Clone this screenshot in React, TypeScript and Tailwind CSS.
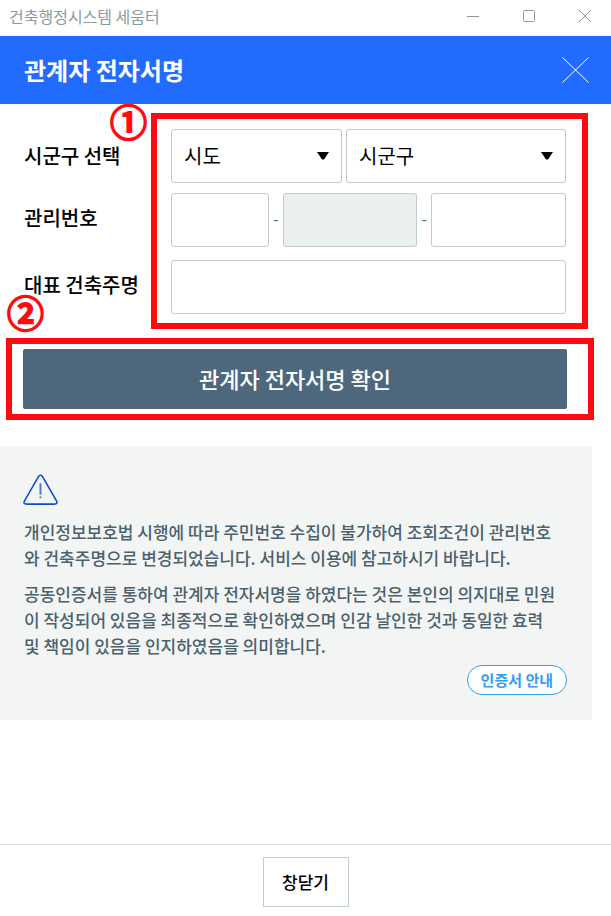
import type { ReactNode } from "react";

const fieldClass =
  "h-[54px] w-full min-w-0 rounded-[3px] border border-[#c0cdcd] bg-white px-3 text-xl text-black disabled:bg-[#eaefef]";

function SelectBox({ id, label, text, className }: { id: string; label: string; text: string; className: string }) {
  return (
    <div className={`relative min-w-0 ${className}`}>
      <select id={id} aria-label={label} className={`${fieldClass} appearance-none`}>
        <option>{text}</option>
      </select>
      <svg
        viewBox="0 0 12 8"
        className="pointer-events-none absolute top-[23px] right-[13px] h-2 w-3 fill-black"
        aria-hidden="true"
      >
        <path d="M0 0h12L7 7.5H5z" />
      </svg>
    </div>
  );
}

function Label({ htmlFor, children }: { htmlFor: string; children: ReactNode }) {
  return (
    <label htmlFor={htmlFor} className="w-[147px] shrink-0 text-xl leading-[50px] font-medium text-black">
      {children}
    </label>
  );
}

function Marker({ children, className }: { children: ReactNode; className: string }) {
  return (
    <span
      className={`absolute text-[37px] leading-9 font-medium text-[#ff0a10] [-webkit-text-stroke:2px_#ff0a10] ${className}`}
    >
      {children}
    </span>
  );
}

export default function App() {
  return (
    <div className="flex min-h-screen flex-col bg-white font-['Noto_Sans_CJK_KR',sans-serif]">
      <div className="flex h-9 items-center justify-between pr-5 pl-[9px] text-[#8a9aa0]">
        <span className="pb-1 text-base leading-7">건축행정시스템 세움터</span>
        <div className="flex items-center gap-11 pb-1">
          <button type="button" aria-label="최소화">
            <svg viewBox="0 0 12 12" className="h-3 w-3" fill="none" stroke="currentColor">
              <path d="M0 6.5h12" />
            </svg>
          </button>
          <button type="button" aria-label="최대화">
            <svg viewBox="0 0 12 12" className="h-3 w-3" fill="none" stroke="currentColor">
              <rect x="0.5" y="0.5" width="11" height="11" rx="1" />
            </svg>
          </button>
          <button type="button" aria-label="창 닫기">
            <svg viewBox="0 0 12 12" className="h-3 w-3" fill="none" stroke="currentColor">
              <path d="M0 0l12 12M12 0L0 12" />
            </svg>
          </button>
        </div>
      </div>

      <header className="flex h-[68px] items-center justify-between bg-[#226bff] pr-[22px] pl-6 text-white">
        <h1 className="text-2xl font-bold">관계자 전자서명</h1>
        <button type="button" aria-label="닫기">
          <svg viewBox="0 0 27 26" className="h-[26px] w-[27px]" fill="none" stroke="currentColor">
            <path d="M0.5 0.5l26 25M26.5 0.5l-26 25" />
          </svg>
        </button>
      </header>

      <main className="mr-[19px] grow">
        <form className="pt-[25px] pr-[25px] pl-[23px]">
          <div className="relative px-px">
            <div className="flex items-center">
              <Label htmlFor="sido">시군구 선택</Label>
              <div className="flex min-w-0 grow gap-1">
                <SelectBox id="sido" label="시도" text="시도" className="flex-[171]" />
                <SelectBox id="sigungu" label="시군구" text="시군구" className="flex-[220]" />
              </div>
            </div>
            <div className="mt-[10px] flex">
              <Label htmlFor="no1">관리번호</Label>
              <div className="flex min-w-0 grow items-center text-base text-[#4d677d]">
                <div className="min-w-0 flex-[98]">
                  <input id="no1" type="text" className={fieldClass} />
                </div>
                <span className="w-[14px] pb-1 text-center">-</span>
                <div className="min-w-0 flex-[135]">
                  <input aria-label="관리번호 구분" type="text" disabled className={fieldClass} />
                </div>
                <span className="w-[14px] pb-1 text-center">-</span>
                <div className="min-w-0 flex-[135]">
                  <input aria-label="관리번호 일련번호" type="text" className={fieldClass} />
                </div>
              </div>
            </div>
            <div className="mt-[13px] flex">
              <Label htmlFor="owner">대표 건축주명</Label>
              <input id="owner" type="text" className={fieldClass} />
            </div>
            <div className="pointer-events-none absolute -top-4 -right-[21px] -bottom-[15px] left-32 border-6 border-[#ff0a10]" />
            <Marker className="-top-[26px] left-[87px]">①</Marker>
          </div>
          <div className="relative mt-[35px]">
            <button
              type="button"
              className="h-[60px] w-full rounded-[2px] bg-[#4d677d] pb-0.5 text-[22px] font-medium text-white"
            >
              관계자 전자서명 확인
            </button>
            <div className="pointer-events-none absolute -top-[11px] -right-[27px] -bottom-[11px] -left-[17px] border-6 border-[#ff0a10]" />
            <Marker className="-top-[55px] -left-4">②</Marker>
          </div>
        </form>

        <section className="mt-[37px] bg-[#f3f5f5] pt-7 pr-[25px] pb-[25px] pl-6 text-[#4b626d]">
          <svg viewBox="0 0 36 32" className="-ml-px h-8 w-[35px]" fill="none" strokeLinejoin="round">
            <path
              d="M16.2 1.8Q18 0 19.8 1.8L34.6 27.5Q35.8 30.4 32.6 30.5H3.4Q0.2 30.4 1.4 27.5Z"
              stroke="#0b4cd0"
              strokeWidth="1.6"
            />
            <path d="M18 9v12M18 22.8v1.6" stroke="#3b82d0" strokeWidth="2" />
          </svg>
          <p className="mt-[13px] text-[17px] leading-[26px] font-medium">
            개인정보보호법 시행에 따라 주민번호 수집이 불가하여 조회조건이 관리번호
            <br />와 건축주명으로 변경되었습니다. 서비스 이용에 참고하시기 바랍니다.
          </p>
          <p className="mt-[10px] text-[17px] leading-[26px] font-medium">
            공동인증서를 통하여 관계자 전자서명을 하였다는 것은 본인의 의지대로 민원
            <br />이 작성되어 있음을 최종적으로 확인하였으며 인감 날인한 것과 동일한 효력
            <br />및 책임이 있음을 인지하였음을 의미합니다.
          </p>
          <div className="mt-[6px] flex justify-end">
            <button
              type="button"
              className="h-[30px] rounded-full border border-[#36a0ee] bg-white px-[13px] text-[15px] font-bold text-[#369cf0]"
            >
              인증서 안내
            </button>
          </div>
        </section>
      </main>

      <footer className="flex h-[72px] justify-center border-t border-[#dbe2e2] pt-3">
        <button
          type="button"
          className="h-[50px] w-[86px] border border-[#c0cdcd] bg-white text-[17px] font-medium text-black"
        >
          창닫기
        </button>
      </footer>
    </div>
  );
}
